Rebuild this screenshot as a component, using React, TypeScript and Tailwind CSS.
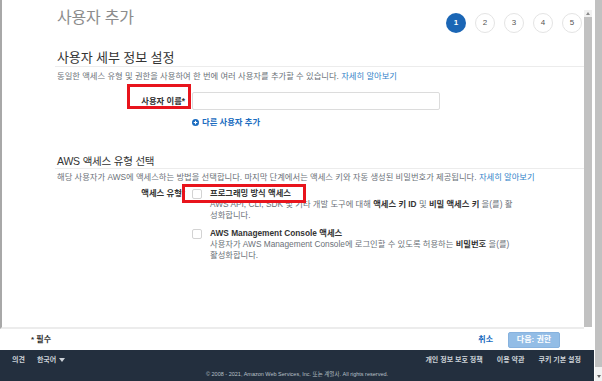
import React from 'react'

const steps = [1, 2, 3, 4, 5]

function Checkbox() {
  return <span className="mt-[2px] block w-[10px] h-[10px] shrink-0 rounded-[2px] border border-[#d3d3d3] bg-white" />
}

export default function App() {
  return (
    <div className="flex w-[602px] h-[381px] overflow-hidden bg-white font-['Liberation_Sans','Noto_Sans_CJK_KR',sans-serif] text-[#333]">
      <div className="flex flex-col w-[594px]">
        <div className="flex h-[329px]">
          {/* main panel */}
          <div className="relative w-[584px] border-l-2 border-b-2 border-l-[#a8a8a8] border-b-[#ececec]">
            <div className="pt-[8px] pl-[53px]">
              <div className="flex justify-between">
                <h1 className="pl-[2px] text-[16px] leading-[20px] tracking-[-0.2px] text-[#8c8c8c]">사용자 추가</h1>
                <div className="flex gap-[9px] mt-[5px] mr-[2px]">
                  {steps.map((s) => (
                    <div key={s}
                      className={`w-[20px] h-[20px] rounded-full flex items-center justify-center text-[8px] ${s === 1 ? 'bg-[#1b66b5] text-white font-bold' : 'border border-[#e4e4e4] text-[#555]'}`}>
                      {s}
                    </div>
                  ))}
                </div>
              </div>

              <h2 className="mt-[16px] h-[18px] pl-[2px] border-b border-[#ececec] text-[13px] leading-[17px] tracking-[-0.1px] text-[#333]">
                사용자 세부 정보 설정
              </h2>
              <p className="mt-[3px] pl-[2px] text-[8.3px] leading-[12px] text-[#6b7178] whitespace-nowrap">
                동일한 액세스 유형 및 권한을 사용하여 한 번에 여러 사용자를 추가할 수 있습니다. <span className="text-[#2f7fc8]">자세히 알아보기</span>
              </p>

              <div className="mt-[10px] flex items-center">
                <label className="w-[130px] text-right text-[8.3px] leading-[18px] font-bold text-[#333]">사용자 이름*</label>
                <div className="ml-[7px] w-[248px] h-[18px] rounded-[2px] border border-[#dcdcdc] bg-white" />
              </div>

              <div className="mt-[6px] ml-[137px] flex items-center gap-[2px] h-[12px]">
                <svg width="7" height="7" viewBox="0 0 7 7">
                  <circle cx="3.5" cy="3.5" r="3.5" fill="#1a6cc0" />
                  <path d="M3.5 1.7v3.6M1.7 3.5h3.6" stroke="white" strokeWidth="1.1" />
                </svg>
                <span className="ml-[1px] text-[8.3px] leading-[12px] font-bold text-[#1a6cc0]">다른 사용자 추가</span>
              </div>

              <h2 className="mt-[26px] h-[15px] pl-[2px] border-b border-[#ececec] text-[10.5px] leading-[14px] tracking-[-0.2px] text-[#333]">
                AWS 액세스 유형 선택
              </h2>
              <p className="mt-[2px] pl-[2px] text-[8.3px] leading-[12px] text-[#6b7178] whitespace-nowrap">
                해당 사용자가 AWS에 액세스하는 방법을 선택합니다. 마지막 단계에서는 액세스 키와 자동 생성된 비밀번호가 제공됩니다. <span className="text-[#2f7fc8]">자세히 알아보기</span>
              </p>

              <div className="mt-[4px] flex">
                <div className="w-[130px] text-right text-[8.3px] leading-[12px] font-bold text-[#333]">액세스 유형*</div>
                <div className="ml-[7px] flex flex-col text-[8.3px] whitespace-nowrap">
                  <div className="flex gap-[8px]">
                    <Checkbox />
                    <div>
                      <div className="leading-[12px] font-bold text-[#333]">프로그래밍 방식 액세스</div>
                      <div className="leading-[11px] text-[#6b7178]">
                        AWS API, CLI, SDK 및 기타 개발 도구에 대해 <b className="text-[#333]">액세스 키 ID</b> 및 <b className="text-[#333]">비밀 액세스 키</b> 을(를) 활<br />
                        성화합니다.
                      </div>
                    </div>
                  </div>
                  <div className="flex gap-[8px] mt-[6px]">
                    <Checkbox />
                    <div>
                      <div className="leading-[12px] font-bold text-[#333]">AWS Management Console 액세스</div>
                      <div className="leading-[11px] text-[#6b7178]">
                        사용자가 AWS Management Console에 로그인할 수 있도록 허용하는 <b className="text-[#333]">비밀번호</b> 을(를)<br />
                        활성화합니다.
                      </div>
                    </div>
                  </div>
                </div>
              </div>
            </div>

            {/* annotation boxes */}
            <div className="absolute left-[125px] top-[84px] w-[64px] h-[25px] border-[3px] border-[#e8141c]" />
            <div className="absolute left-[180px] top-[184px] w-[124px] h-[19px] border-[3px] border-[#e8141c]" />
          </div>

          {/* inner scrollbar */}
          <div className="w-[10px] pt-[10px] pb-[2px] pr-[2px] flex flex-col">
            <div className="h-[7px] bg-[#f1f1f1] flex items-center justify-center">
              <svg width="4" height="3" viewBox="0 0 4 3"><path d="M2 0L4 3H0z" fill="#8a8a8a" /></svg>
            </div>
            <div className="flex-1 bg-[#c1c1c1]" />
          </div>
        </div>

        {/* action bar */}
        <div className="h-[21px] flex items-center pl-[31px] pr-[34px]">
          <span className="text-[8px] font-bold text-[#333]">* 필수</span>
          <span className="ml-auto text-[8px] font-bold text-[#1a6cc0]">취소</span>
          <button className="ml-[15px] w-[52px] h-[16px] rounded-[2px] bg-[#93bde6] border border-[#87b2de] text-white text-[8px] font-bold">다음: 권한</button>
        </div>

        {/* footer */}
        <div className="h-[31px] bg-[#232f3e] flex flex-col text-[#ccd2d8]">
          <div className="h-[20px] flex items-center pl-[12px] pr-[13px] text-[7px] font-bold">
            <span>의견</span>
            <span className="ml-[12px] flex items-center gap-[3px]">
              한국어
              <svg width="6" height="4" viewBox="0 0 6 4"><path d="M0 0H6L3 4z" fill="#ccd2d8" /></svg>
            </span>
            <span className="ml-auto">개인 정보 보호 정책</span>
            <span className="ml-[14px]">이용 약관</span>
            <span className="ml-[14px]">쿠키 기본 설정</span>
          </div>
          <div className="h-[8px] text-center text-[5.5px] leading-[8px] text-[#b8c0c8] whitespace-nowrap">
            © 2008 - 2021, Amazon Web Services, Inc. 또는 계열사. All rights reserved.
          </div>
        </div>
      </div>

      {/* outer scrollbar */}
      <div className="w-[8px] flex flex-col border-l border-white">
        <div className="flex-1 bg-[#c1c1c1]" />
        <div className="h-[14px] bg-[#f1f1f1] flex items-end justify-center pb-[3px]">
          <svg width="4" height="3" viewBox="0 0 4 3"><path d="M0 0H4L2 3z" fill="#666" /></svg>
        </div>
      </div>
    </div>
  )
}
